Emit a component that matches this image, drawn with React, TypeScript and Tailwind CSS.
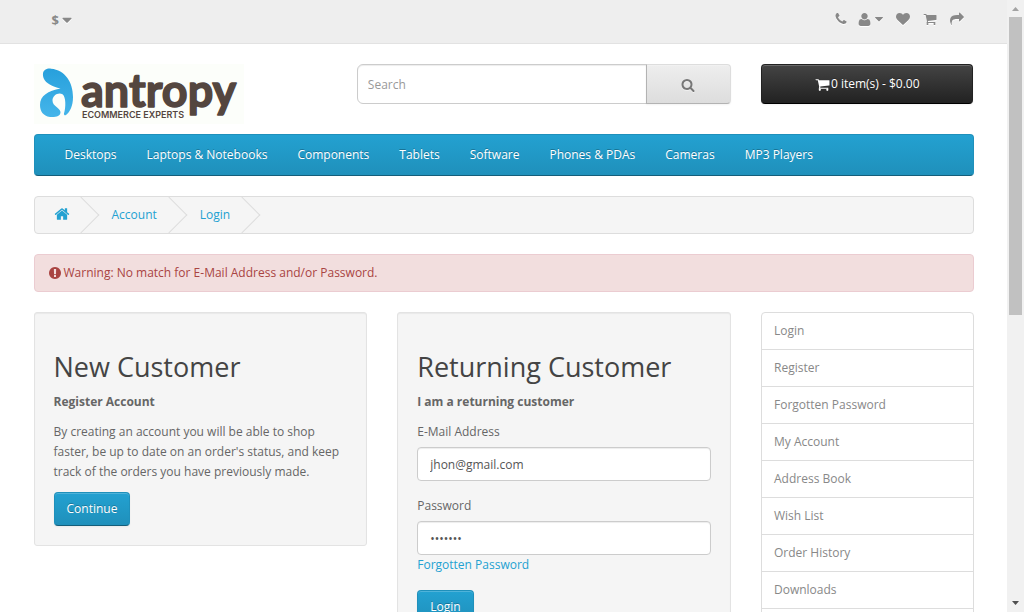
import React from "react";

const ICONS = {
  phone:
    "M1600 1240q0 27-10 70.5t-21 68.5q-21 50-122 106-94 51-186 51-27 0-53-3.5t-57-12.5-47-14.5-55.5-20.5-49.5-18q-98-35-175-83-127-79-264-216t-216-264q-48-77-83-175-3-9-18-49.5t-20.5-55.5-14.5-47-12.5-57-3.5-53q0-92 51-186 56-101 106-122 25-11 68.5-21t70.5-10q14 0 21 3 18 6 53 76 11 19 30 54t35 63.5 31 53.5q3 4 17.5 25t21.5 35.5 7 28.5q0 20-28.5 50t-62 55-62 53-28.5 46q0 9 5 22.5t8.5 20.5 14 24 11.5 19q76 137 174 235t235 174q2 1 19 11.5t24 14 20.5 8.5 22.5 5q18 0 46-28.5t53-62 55-62 50-28.5q14 0 28.5 7t35.5 21.5 25 17.5q25 15 53.5 31t63.5 35 54 30q70 35 76 53 3 7 3 21z",
  heart:
    "M896 1664q-26 0-44-18l-624-602q-10-8-27.5-26t-55.5-65.5-68-97.5-53.5-121-23.5-138q0-220 127-344t351-124q62 0 126.5 21.5t120 58 95.5 68.5 76 68q36-36 76-68t95.5-68.5 120-58 126.5-21.5q224 0 351 124t127 344q0 221-229 450l-623 600q-18 18-44 18z",
  cart: "M704 1536q0 52-38 90t-90 38-90-38-38-90 38-90 90-38 90 38 38 90zm896 0q0 52-38 90t-90 38-90-38-38-90 38-90 90-38 90 38 38 90zm128-1088v512q0 24-16.5 42.5t-40.5 21.5l-1044 122q13 60 13 70 0 16-24 64h920q26 0 45 19t19 45-19 45-45 19h-1024q-26 0-45-19t-19-45q0-11 8-31.5t16-36 21.5-40 15.5-29.5l-177-823h-204q-26 0-45-19t-19-45 19-45 45-19h256q16 0 28.5 6.5t19.5 15.5 13 24.5 8 26 5.5 29.5 4.5 26h1201q26 0 45 19t19 45z",
  share:
    "M1792 640q0 26-19 45l-512 512q-19 19-45 19t-45-19-19-45v-256h-224q-98 0-175.5 6t-154 21.5-133 42.5-105.5 69.5-80 101-48.5 138.5-17.5 181q0 55 5 123 0 6 2.5 23.5t2.5 26.5q0 15-8.5 25t-23.5 10q-16 0-28-17-7-9-13-22t-13.5-30-10.5-24q-127-285-127-451 0-199 53-333 162-403 875-403h224v-256q0-26 19-45t45-19 45 19l512 512q19 19 19 45z",
  search:
    "M1216 832q0-185-131.5-316.5t-316.5-131.5-316.5 131.5-131.5 316.5 131.5 316.5 316.5 131.5 316.5-131.5 131.5-316.5zm512 832q0 52-38 90t-90 38q-54 0-90-38l-343-342q-179 124-399 124-143 0-273.5-55.5t-225-150-150-225-55.5-273.5 55.5-273.5 150-225 225-150 273.5-55.5 273.5 55.5 225 150 150 225 55.5 273.5q0 220-124 399l343 343q37 37 37 90z",
  home: "M1472 992v480q0 26-19 45t-45 19h-384v-384h-256v384h-384q-26 0-45-19t-19-45v-480q0-1 .5-3t.5-3l575-474 575 474q1 2 1 6zm223-69l-62 74q-8 9-21 11h-3q-13 0-21-7l-692-577-692 577q-12 8-24 7-13-2-21-11l-62-74q-8-10-7-23.5t11-21.5l719-599q32-26 76-26t76 26l244 204v-195q0-14 9-23t23-9h192q14 0 23 9t9 23v408l219 182q10 8 11 21.5t-7 23.5z",
  alert:
    "M896 128q209 0 385.5 103t279.5 279.5 103 385.5-103 385.5-279.5 279.5-385.5 103-385.5-103-279.5-279.5-103-385.5 103-385.5 279.5-279.5 385.5-103zm128 1247v-190q0-14-9-23.5t-22-9.5h-192q-13 0-23 10t-10 23v190q0 13 10 23t23 10h192q13 0 22-9.5t9-23.5zm-2-344l18-621q0-12-10-18-10-8-24-8h-220q-14 0-24 8-10 6-10 18l18 621q0 10 10 17.5t24 17.5h185q14 0 23.5-7.5t10.5-17.5z",
  caret:
    "M1408 704q0 26-19 45l-448 448q-19 19-45 19t-45-19l-448-448q-19-19-19-45t19-45 45-19h896q26 0 45 19t19 45z",
};

const USER =
  "M1408 131q0 -120 -73 -189.5t-194 -69.5h-874q-121 0 -194 69.5t-73 189.5q0 53 3.5 103.5t14 109t26.5 108.5t43 97.5t62 81t85.5 53.5t111.5 20q9 0 42 -21.5t74.5 -48t108 -48t133.5 -21.5t133.5 21.5t108 48t74.5 48t42 21.5q61 0 111.5 -20t85.5 -53.5t62 -81t43 -97.5t26.5 -108.5t14 -109t3.5 -103.5zM1088 1024q0 -159 -112.5 -271.5t-271.5 -112.5t-271.5 112.5t-112.5 271.5t112.5 271.5t271.5 112.5t271.5 -112.5t112.5 -271.5z";

function Icon({ name, className = "size-[14px]" }: { name: keyof typeof ICONS; className?: string }) {
  return (
    <svg viewBox="0 0 1792 1792" aria-hidden="true" className={`shrink-0 fill-current ${className}`}>
      <path d={ICONS[name]} />
    </svg>
  );
}

function UserIcon() {
  return (
    <svg viewBox="0 0 1792 1792" aria-hidden="true" className="size-[15px] shrink-0 fill-current">
      <path d={USER} transform="translate(192 1536) scale(1 -1)" />
    </svg>
  );
}

const PRIMARY =
  "rounded border border-[#1f90bb] border-b-[#145e7a] bg-linear-to-b from-[#23a1d1] to-[#1f90bb] text-white [text-shadow:0_-1px_0_rgba(0,0,0,0.25)]";
const BUTTON = "h-[34px] px-3 shadow-[inset_0_1px_0_rgba(255,255,255,0.2),0_1px_2px_rgba(0,0,0,0.05)]";
const FIELD =
  "block h-[34px] w-full rounded border border-[#ccc] bg-white px-3 text-[#555] shadow-[inset_0_1px_1px_rgba(0,0,0,0.075)] outline-none";
const PANEL = "rounded-[3px] border border-[#e3e3e3] bg-[#f5f5f5] p-[19px] shadow-[inset_0_1px_1px_rgba(0,0,0,0.05)]";
const HEADING = "mt-5 mb-[10px] text-[27px] leading-[30px] text-[#444]";

const CATEGORIES = [
  "Desktops",
  "Laptops & Notebooks",
  "Components",
  "Tablets",
  "Software",
  "Phones & PDAs",
  "Cameras",
  "MP3 Players",
];

const ACCOUNT_LINKS = [
  "Login",
  "Register",
  "Forgotten Password",
  "My Account",
  "Address Book",
  "Wish List",
  "Order History",
  "Downloads",
];

const CONTAINER = "mx-auto w-full max-w-[970px] px-[15px]";

function TopBar() {
  return (
    <nav className="border-b border-[#e2e2e2] bg-[#eee] text-[#888] [&_svg]:drop-shadow-[0_1px_0_#fff]">
      <div className={`${CONTAINER} flex h-[43px] justify-between pt-2`}>
        <button type="button" aria-label="Currency" className="ml-1 flex h-6 items-center px-[14px] text-[13px]">
          <strong>$</strong>
          <Icon name="caret" className="size-4" />
        </button>
        <div className="mr-[10px] flex h-[22px] items-center gap-[13px]">
          <a href="#contact" aria-label="Contact us">
            <Icon name="phone" />
          </a>
          <button type="button" aria-label="My account" className="-ml-1 flex items-center">
            <UserIcon />
            <Icon name="caret" />
          </button>
          <a href="#wishlist" aria-label="Wish list" className="-ml-[3px]">
            <Icon name="heart" />
          </a>
          <a href="#cart" aria-label="Shopping cart">
            <Icon name="cart" />
          </a>
          <a href="#checkout" aria-label="Checkout">
            <Icon name="share" />
          </a>
        </div>
      </div>
    </nav>
  );
}

function Logo() {
  return (
    <a href="#home" className="block w-[210px]">
      <svg viewBox="0 0 210 60" role="img" aria-label="antropy ecommerce experts" className="block w-full">
        <defs>
          <linearGradient id="swoosh" x1="0" y1="0" x2="0" y2="1">
            <stop offset="0" stopColor="#27a0dc" />
            <stop offset="1" stopColor="#45b5ea" />
          </linearGradient>
        </defs>
        <rect width="210" height="60" fill="#fcfefa" />
        <path
          fill="url(#swoosh)"
          d="M9 9.500C9.500 6 13 4.200 17 4.700C31 6 39 18 39 33C39 42 36 48 32 51C30.800 51.800 29.800 51 30 49.500C32 43 32 33 28.500 30.200C24.500 28 18.500 31 18.500 36.500C18.500 42.500 26 43.500 26.500 48C26.700 52.500 21 53.500 16 53C9 52 6 47 6 41C6 31.500 14 27 26.500 24.500C18 22.500 12 19 10 15C9 13 8.800 11 9 9.500Z"
        />
        <text x="47" y="43" fill="#54463f" stroke="#54463f" strokeWidth="1.500" strokeLinejoin="round" className="font-['Lato',sans-serif] text-[45px] font-bold">
          antropy
        </text>
        <text x="48" y="54" fill="#54463f" className="font-['Inter',sans-serif] text-[9px] font-semibold">
          ECOMMERCE EXPERTS
        </text>
      </svg>
    </a>
  );
}

function Header() {
  return (
    <header className={`${CONTAINER} mt-5 grid grid-cols-12 gap-x-[30px]`}>
      <div className="col-span-4 pb-[10px]">
        <Logo />
      </div>
      <form className="col-span-5 flex h-10" onSubmit={(e) => e.preventDefault()}>
        <input
          type="text"
          aria-label="Search"
          placeholder="Search"
          className="h-10 min-w-0 flex-1 rounded-l-md border border-[#ccc] bg-white px-[10px] shadow-[inset_0_1px_1px_rgba(0,0,0,0.075)] outline-none placeholder:text-[#999]"
        />
        <button
          type="submit"
          aria-label="Submit search"
          className="-ml-px flex h-10 w-[85px] items-center justify-center rounded-r border border-[#ddd] border-b-[#b3b3b3] border-l-[#b3b3b3] bg-linear-to-b from-[#eee] to-[#ddd] pt-[2px] text-[#777] shadow-[inset_0_1px_0_rgba(255,255,255,0.2),0_1px_2px_rgba(0,0,0,0.05)]"
        >
          <Icon name="search" className="size-[14px] drop-shadow-[0_1px_0_rgba(255,255,255,0.5)]" />
        </button>
      </form>
      <div className="col-span-3">
        <button
          type="button"
          className="flex h-10 w-full items-center justify-center rounded border border-[#222] border-b-black bg-linear-to-b from-[#444] to-[#222] text-white shadow-[inset_0_1px_0_rgba(255,255,255,0.2),0_1px_2px_rgba(0,0,0,0.05)] [text-shadow:0_-1px_0_rgba(0,0,0,0.25)]"
        >
          <Icon name="cart" className="mr-px size-[15px]" />
          0 item(s) - $0.00
        </button>
      </div>
    </header>
  );
}

function Breadcrumb() {
  const crumb =
    "relative px-5 after:absolute after:-top-[3px] after:-right-[5px] after:size-[26px] after:-rotate-45 after:border-r after:border-b after:border-[#ddd] after:content-['']";
  return (
    <ol className="mb-5 flex h-[38px] gap-[3px] overflow-hidden rounded border border-[#ddd] bg-[#f5f5f5] py-2 text-[#23a1d1]">
      <li className={crumb}>
        <a href="#home" aria-label="Home" className="flex h-[18px] w-[14px] items-center justify-center">
          <Icon name="home" className="size-4" />
        </a>
      </li>
      <li className={crumb}>
        <a href="#account">Account</a>
      </li>
      <li className={crumb}>
        <a href="#login">Login</a>
      </li>
    </ol>
  );
}

function NewCustomer() {
  return (
    <section className={PANEL}>
      <h2 className={HEADING}>New Customer</h2>
      <p className="mb-[10px] font-bold">Register Account</p>
      <p className="mb-[10px]">
        By creating an account you will be able to shop faster, be up to date on an order's status, and keep track of the
        orders you have previously made.
      </p>
      <button type="button" className={`${PRIMARY} ${BUTTON}`}>
        Continue
      </button>
    </section>
  );
}

function ReturningCustomer() {
  return (
    <section className={PANEL}>
      <h2 className={HEADING}>Returning Customer</h2>
      <p className="mb-[10px] font-bold">I am a returning customer</p>
      <form onSubmit={(e) => e.preventDefault()}>
        <div className="mb-[15px]">
          <label htmlFor="email" className="mb-[5px] block">
            E-Mail Address
          </label>
          <input id="email" type="text" defaultValue="jhon@gmail.com" className={FIELD} />
        </div>
        <div className="mb-[15px]">
          <label htmlFor="password" className="mb-[5px] block">
            Password
          </label>
          <input id="password" type="password" defaultValue="secret1" className={FIELD} />
          <a href="#forgotten" className="block text-[#23a1d1]">
            Forgotten Password
          </a>
        </div>
        <button type="submit" className={`${PRIMARY} ${BUTTON}`}>
          Login
        </button>
      </form>
    </section>
  );
}

function Scrollbar() {
  return (
    <div aria-hidden="true" className="flex w-[17px] shrink-0 flex-col items-center bg-[#f1f1f1]">
      <svg viewBox="0 0 17 17" className="size-[17px]">
        <path d="M5 11h7L8.500 7z" fill="#a3a3a3" />
      </svg>
      <div className="w-[13px] flex-[298] bg-[#c1c1c1]" />
      <div className="flex-[280]" />
      <svg viewBox="0 0 17 17" className="size-[17px]">
        <path d="M5 6h7L8.500 10z" fill="#505050" />
      </svg>
    </div>
  );
}

export default function App() {
  return (
    <div className="flex h-screen overflow-hidden bg-white font-['Open_Sans',sans-serif] text-[12px] leading-5 text-[#666]">
      <div className="min-w-0 flex-1 overflow-hidden">
        <TopBar />
        <Header />
        <div className={CONTAINER}>
          <nav className={`${PRIMARY} mb-5 h-[42px] px-[15px]`}>
            <ul className="flex">
              {CATEGORIES.map((category) => (
                <li key={category}>
                  <a href="#category" className="block px-[15px] py-[10px]">
                    {category}
                  </a>
                </li>
              ))}
            </ul>
          </nav>
          <Breadcrumb />
          <div
            role="alert"
            className="mb-5 flex h-[38px] items-center rounded border border-[#ebccd1] bg-[#f2dede] px-[13px] text-[#a94442]"
          >
            <Icon name="alert" className="mr-[2px] size-[14px]" />
            Warning: No match for E-Mail Address and/or Password.
          </div>
          <div className="grid grid-cols-12 items-start gap-x-[30px]">
            <main className="col-span-9 grid grid-cols-2 items-start gap-x-[30px]">
              <NewCustomer />
              <ReturningCustomer />
            </main>
            <aside className="col-span-3">
              <ul className="divide-y divide-[#ddd] rounded-t border border-[#ddd] pb-5 text-[#888]">
                {ACCOUNT_LINKS.map((link) => (
                  <li key={link} className="last:border-b last:border-[#ddd]">
                    <a href="#link" className="block px-3 py-2">
                      {link}
                    </a>
                  </li>
                ))}
              </ul>
            </aside>
          </div>
        </div>
      </div>
      <Scrollbar />
    </div>
  );
}
